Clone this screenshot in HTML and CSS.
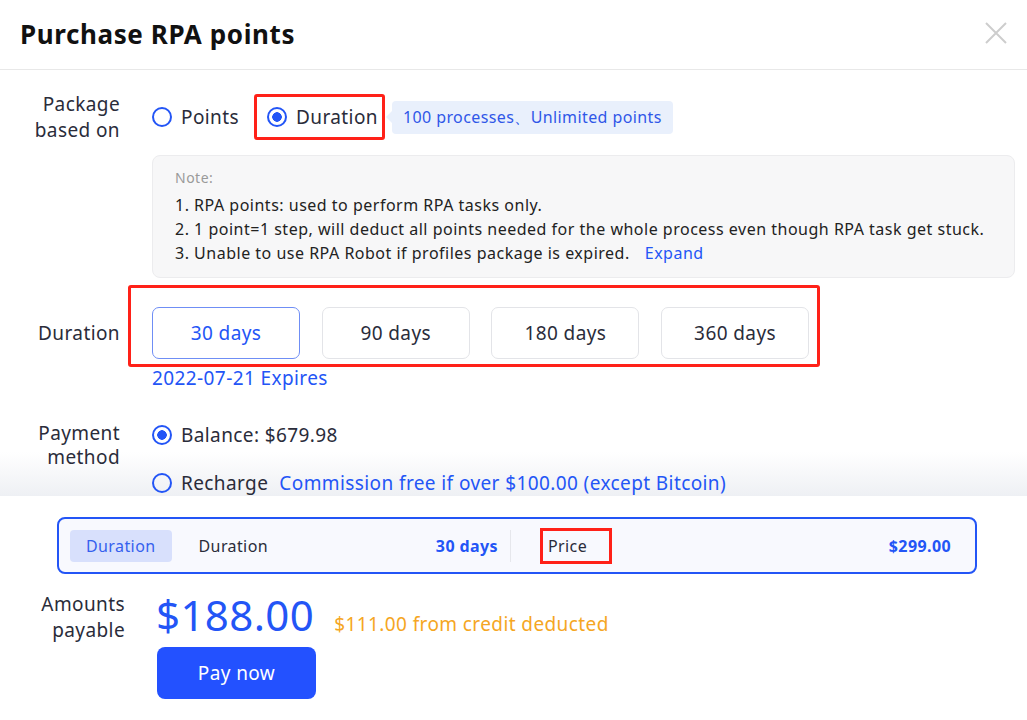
FILE: index.html
```html
<!DOCTYPE html>
<html lang="en">
<head>
    <meta charset="UTF-8">
    <meta name="viewport" content="width=device-width, initial-scale=1.0">
    <title>Purchase RPA points</title>
    <link rel="stylesheet" href="styles.css">
</head>
<body>
    <div class="dialog">
        <div class="dialog__head">
            <h2 class="dialog__title">Purchase RPA points</h2>
            <svg class="dialog__close" width="22" height="22" viewBox="0 0 22 22">
                <path d="M1 1L21 21M21 1L1 21" stroke="#cdcdcd" stroke-width="2" fill="none"/>
            </svg>
        </div>

        <div class="dialog__body">
            <div class="row row--package">
                <div class="row__label">Package<br>based on</div>
                <div class="row__content">
                    <div class="radios">
                        <label class="radio"><span class="radio__dot"></span>Points</label>
                        <label class="radio radio--checked radio--marked"><span class="radio__dot"></span>Duration</label>
                        <span class="tag">100 processes、Unlimited points</span>
                    </div>
                    <div class="note">
                        <div class="note__title">Note:</div>
                        <div class="note__line">1. RPA points: used to perform RPA tasks only.</div>
                        <div class="note__line">2. 1 point=1 step, will deduct all points needed for the whole process even though RPA task get stuck.</div>
                        <div class="note__line">3. Unable to use RPA Robot if profiles package is expired.<a class="note__link">Expand</a></div>
                    </div>
                </div>
            </div>

            <div class="row row--duration">
                <div class="row__label">Duration</div>
                <div class="row__content">
                    <div class="options">
                        <div class="option option--active">30 days</div>
                        <div class="option">90 days</div>
                        <div class="option">180 days</div>
                        <div class="option">360 days</div>
                    </div>
                    <div class="expires">2022-07-21 Expires</div>
                </div>
            </div>

            <div class="row row--payment">
                <div class="row__label">Payment<br>method</div>
                <div class="row__content">
                    <label class="radio radio--checked"><span class="radio__dot"></span>Balance: $679.98</label>
                    <label class="radio radio--recharge"><span class="radio__dot"></span>Recharge<span class="radio__hint">Commission free if over $100.00 (except Bitcoin)</span></label>
                </div>
            </div>
        </div>

        <div class="footer">
            <div class="summary">
                <div class="summary__half">
                    <span class="summary__chip">Duration</span>
                    <span class="summary__name">Duration</span>
                    <span class="summary__value">30 days</span>
                </div>
                <span class="summary__sep"></span>
                <div class="summary__half">
                    <span class="summary__name summary__name--marked">Price</span>
                    <span class="summary__value">$299.00</span>
                </div>
            </div>
            <div class="pay">
                <div class="row__label pay__label">Amounts<br>payable</div>
                <div class="pay__content">
                    <div class="pay__amount">
                        <span class="pay__price">$188.00</span>
                        <span class="pay__credit">$111.00 from credit deducted</span>
                    </div>
                    <button class="pay__btn">Pay now</button>
                </div>
            </div>
        </div>
    </div>
</body>
</html>
```

FILE: styles.css
```css
:root {
    --blue: #2355f6;
    --text: #2a2c3a;
    --red: #ff2118;
}

html,
body {
    height: 100%;
}

body {
    margin: 0;
    background: #fff;
    color: var(--text);
    font-family: "Noto Sans", "Open Sans", sans-serif;
    letter-spacing: 0.4px;
}

.dialog {
    width: 1027px;
    height: 720px;
    overflow: hidden;
}

.dialog__head {
    display: flex;
    align-items: center;
    justify-content: space-between;
    height: 69px;
    padding: 0 20px;
    border-bottom: 1px solid #e8e8e8;
}

.dialog__title {
    margin: 0 0 2px;
    font-size: 26px;
    font-weight: 700;
    letter-spacing: 0.6px;
    color: #111;
}

.dialog__close {
    margin-top: -4px;
}

.dialog__body {
    padding: 23px 12px 1px 0;
    background: linear-gradient(#fff calc(100% - 44px), #eef0f4);
}

.row {
    display: flex;
    gap: 32px;
}

.row__label {
    width: 120px;
    flex: none;
    text-align: right;
    font-size: 19px;
    line-height: 26px;
}

.row__content {
    flex: 1;
}

.row--package .row__label {
    margin-top: -2px;
}

.radios {
    display: flex;
    align-items: center;
    gap: 15px;
    height: 48px;
}

.radio {
    display: flex;
    align-items: center;
    gap: 9px;
    font-size: 19px;
}

.radio__dot {
    box-sizing: border-box;
    width: 20px;
    height: 20px;
    flex: none;
    border: 2px solid var(--blue);
    border-radius: 50%;
}

.radio--checked .radio__dot {
    background: radial-gradient(circle, var(--blue) 4.5px, transparent 5px);
}

.radio--marked {
    height: 40px;
    padding: 0 4px 0 10px;
    border: 3px solid var(--red);
    border-radius: 3px;
}

.tag {
    position: relative;
    margin-left: -8px;
    padding: 5px 11px;
    background: #e9f0fc;
    border-radius: 4px;
    color: #2f57e8;
    font-size: 16px;
}

.tag::before {
    position: absolute;
    content: '';
    left: -6px;
    top: calc(50% - 6px);
    border-width: 6px 6px 6px 0;
    border-style: solid;
    border-color: transparent #e9f0fc transparent transparent;
}

.note {
    margin-top: 14px;
    padding: 10px 22px 12px;
    background: #f7f7f8;
    border: 1px solid #ececee;
    border-radius: 8px;
    font-size: 16px;
    line-height: 24px;
    letter-spacing: 0.5px;
    color: #222;
}

.note__title {
    margin-bottom: 3px;
    font-size: 14px;
    color: #9a9a9a;
}

.note__link {
    margin-left: 15px;
    color: var(--blue);
}

.row--duration {
    margin-top: 29px;
}

.row--duration .row__label {
    line-height: 52px;
}

.options {
    display: flex;
    gap: 21.7px;
    width: max-content;
    padding: 19px 8px 5px 21px;
    margin: -22px 0 0 -24px;
    border: 3px solid var(--red);
    border-radius: 3px;
}

.option {
    box-sizing: border-box;
    width: 148px;
    height: 52px;
    display: flex;
    align-items: center;
    justify-content: center;
    border: 1px solid #e3e4e8;
    border-radius: 7px;
    font-size: 19px;
}

.option--active {
    border-color: #6f8ef5;
    color: var(--blue);
}

.expires {
    margin-top: -1px;
    font-size: 19px;
    line-height: 24px;
    color: var(--blue);
}

.row--payment {
    margin-top: 33px;
}

.row--payment .row__label {
    margin-top: -2px;
    line-height: 24px;
}

.row--payment .radio {
    height: 24px;
}

.radio--recharge {
    margin-top: 24px;
}

.radio__hint {
    margin-left: 2px;
    color: var(--blue);
}

.footer {
    padding-top: 21px;
    background: #fff;
}

.summary {
    display: flex;
    align-items: center;
    box-sizing: border-box;
    width: 920px;
    height: 57px;
    margin-left: 57px;
    padding: 0 24px 0 11px;
    background: #f8f9fe;
    border: 2px solid var(--blue);
    border-radius: 8px;
    font-size: 16px;
}

.summary__half {
    flex: 1;
    display: flex;
    align-items: center;
}

.summary__chip {
    padding: 5px 16px;
    background: #d8e0fc;
    border-radius: 4px;
    color: #3560ee;
}

.summary__name {
    margin-left: 27px;
}

.summary__value {
    margin-left: auto;
    font-weight: 700;
    color: var(--blue);
}

.summary__sep {
    width: 1px;
    height: 32px;
    margin: 0 12px;
    background: #e6e7ec;
}

.summary__name--marked {
    margin-left: 17px;
    padding: 4px 22px 4px 5px;
    border: 3px solid var(--red);
}

.pay {
    display: flex;
    gap: 32px;
    margin-top: 15px;
}

.pay__label {
    width: 125px;
    margin-top: 2px;
}

.pay__content {
    display: flex;
    flex-direction: column;
    align-items: flex-start;
}

.pay__amount {
    display: flex;
    align-items: baseline;
    gap: 20px;
    margin-left: -1px;
}

.pay__price {
    font-size: 42px;
    line-height: 52px;
    color: var(--blue);
}

.pay__credit {
    font-size: 19px;
    color: #f5a623;
}

.pay__btn {
    width: 159px;
    height: 52px;
    margin-top: 6px;
    border: 0;
    border-radius: 8px;
    background: #2351ff;
    color: #fff;
    font-family: inherit;
    font-size: 19px;
    letter-spacing: 0.4px;
}
```
